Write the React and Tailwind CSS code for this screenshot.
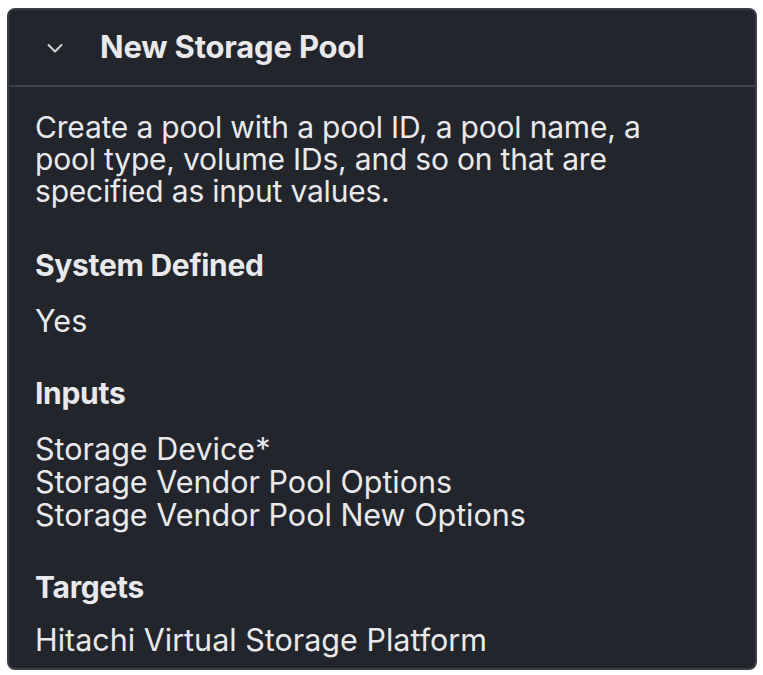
const sections = [
  { title: 'System Defined', items: ['Yes'] },
  {
    title: 'Inputs',
    items: ['Storage Device*', 'Storage Vendor Pool Options', 'Storage Vendor Pool New Options'],
  },
  { title: 'Targets', items: ['Hitachi Virtual Storage Platform'] },
];

export default function App() {
  return (
    <div className="min-h-screen bg-white pt-2 px-[7px] font-['Inter',sans-serif]">
      <div className="w-[750px] rounded-lg border-2 border-[#3a3d44] bg-[#22252c] text-[#e9e9eb]">
        {/* Header */}
        <div className="flex items-center h-[77px] border-b-2 border-[#3e4148] pl-[38px]">
          <svg width="16" height="10" viewBox="0 0 16 10" fill="none" className="text-[#d4d4d8]">
            <polyline points="1.5,2 8,8.5 14.5,2" stroke="currentColor" strokeWidth="2" strokeLinecap="round" strokeLinejoin="round" />
          </svg>
          <h2 className="ml-[37px] text-[31px] font-bold tracking-[-0.2px]">New Storage Pool</h2>
        </div>

        {/* Body */}
        <div className="px-[26px] pt-[24px] pb-[12px]">
          <p className="text-[30px] leading-[32px] tracking-[-0.2px]">
            Create a pool with a pool ID, a pool name, a<br />
            pool type, volume IDs, and so on that are<br />
            specified as input values.
          </p>

          {sections.map((s, i) => (
            <div key={s.title} className={i === 0 ? 'mt-[42px]' : 'mt-[40px]'}>
              <h3 className="text-[30px] font-bold leading-[32px] tracking-[-0.3px]">{s.title}</h3>
              <ul className={s.title === 'Targets' ? 'mt-[20px]' : 'mt-[23px]'}>
                {s.items.map((item) => (
                  <li key={item} className="text-[30.5px] leading-[33px]">
                    {item}
                  </li>
                ))}
              </ul>
            </div>
          ))}
        </div>
      </div>
    </div>
  );
}
